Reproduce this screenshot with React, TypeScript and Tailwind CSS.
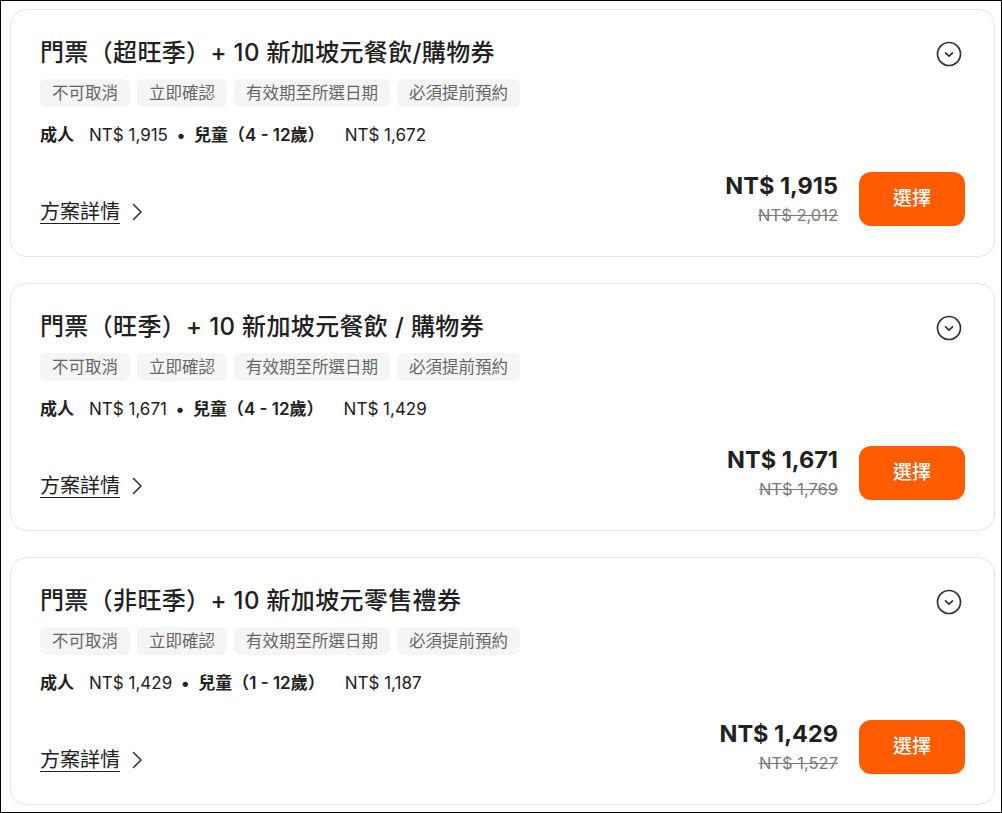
import React from 'react'

interface Plan {
  title: string
  adult: string
  childLabel: string
  child: string
  price: string
  original: string
}

const plans: Plan[] = [
  {
    title: '門票（超旺季）+ 10 新加坡元餐飲/購物券',
    adult: 'NT$ 1,915',
    childLabel: '兒童（4 - 12歲）',
    child: 'NT$ 1,672',
    price: 'NT$ 1,915',
    original: 'NT$ 2,012',
  },
  {
    title: '門票（旺季）+ 10 新加坡元餐飲 / 購物券',
    adult: 'NT$ 1,671',
    childLabel: '兒童（4 - 12歲）',
    child: 'NT$ 1,429',
    price: 'NT$ 1,671',
    original: 'NT$ 1,769',
  },
  {
    title: '門票（非旺季）+ 10 新加坡元零售禮券',
    adult: 'NT$ 1,429',
    childLabel: '兒童（1 - 12歲）',
    child: 'NT$ 1,187',
    price: 'NT$ 1,429',
    original: 'NT$ 1,527',
  },
]

const tags = ['不可取消', '立即確認', '有效期至所選日期', '必須提前預約']

function ChevronCircle() {
  return (
    <svg width="26" height="26" viewBox="0 0 26 26" fill="none" stroke="#333" strokeWidth="1.7">
      <circle cx="13" cy="13" r="11.5" />
      <path d="M9.5 11.8 L13 15.2 L16.5 11.8" strokeLinecap="round" strokeLinejoin="round" />
    </svg>
  )
}

function ChevronRight() {
  return (
    <svg width="14" height="18" viewBox="0 0 14 18" fill="none" stroke="#333" strokeWidth="1.6">
      <path d="M3.5 1.5 L11 9 L3.5 16.5" strokeLinecap="round" strokeLinejoin="round" />
    </svg>
  )
}

function PlanCard({ plan }: { plan: Plan }) {
  return (
    <div className="rounded-2xl border border-[#e6e6e6] bg-white px-[29px] pt-[29px] pb-[30px]">
      {/* title row */}
      <div className="flex items-center justify-between">
        <h2 className="text-[24px] leading-[28px] font-medium tracking-[0.35px] text-[#212121]">
          {plan.title}
        </h2>
        <div className="mr-[3px] mt-[2px]">
          <ChevronCircle />
        </div>
      </div>

      {/* tags */}
      <div className="mt-[12px] flex gap-[7px]">
        {tags.map((t) => (
          <span
            key={t}
            className="h-[28px] rounded-md bg-[#f5f5f5] px-[12px] text-[16.5px] leading-[28px] text-[#666]"
          >
            {t}
          </span>
        ))}
      </div>

      {/* unit prices */}
      <div className="mt-[16px] flex items-center text-[17px] leading-[24px] text-[#212121]">
        <span className="font-semibold">成人</span>
        <span className="ml-[15px]">{plan.adult}</span>
        <span className="mx-[9px] font-bold">•</span>
        <span className="font-semibold">{plan.childLabel}</span>
        <span className="ml-[20px]">{plan.child}</span>
      </div>

      {/* bottom */}
      <div className="mt-[25px] flex items-end justify-between">
        <a className="flex items-center gap-[10px] pb-[2px] text-[20px] leading-[24px] text-[#212121]">
          <span className="underline underline-offset-[4px] decoration-[1px]">方案詳情</span>
          <ChevronRight />
        </a>
        <div className="flex items-end gap-[21px]">
          <div className="flex flex-col items-end">
            <span className="text-[23.5px] leading-[28px] font-bold text-[#212121]">{plan.price}</span>
            <span className="mt-[4px] text-[16.5px] leading-[22px] text-[#7a7a7a] line-through">
              {plan.original}
            </span>
          </div>
          <button className="h-[54px] w-[106px] rounded-xl bg-[#ff5b00] text-[19px] font-medium text-white">
            選擇
          </button>
        </div>
      </div>
    </div>
  )
}

export default function App() {
  return (
    <div
      className="h-[813px] w-[1002px] overflow-hidden border border-black bg-white pl-[9px] pr-[6px] pt-[8px]"
      style={{ fontFamily: 'Inter, "Noto Sans CJK TC", sans-serif' }}
    >
      <div className="flex flex-col gap-[26px]">
        {plans.map((p) => (
          <PlanCard key={p.title} plan={p} />
        ))}
      </div>
    </div>
  )
}
